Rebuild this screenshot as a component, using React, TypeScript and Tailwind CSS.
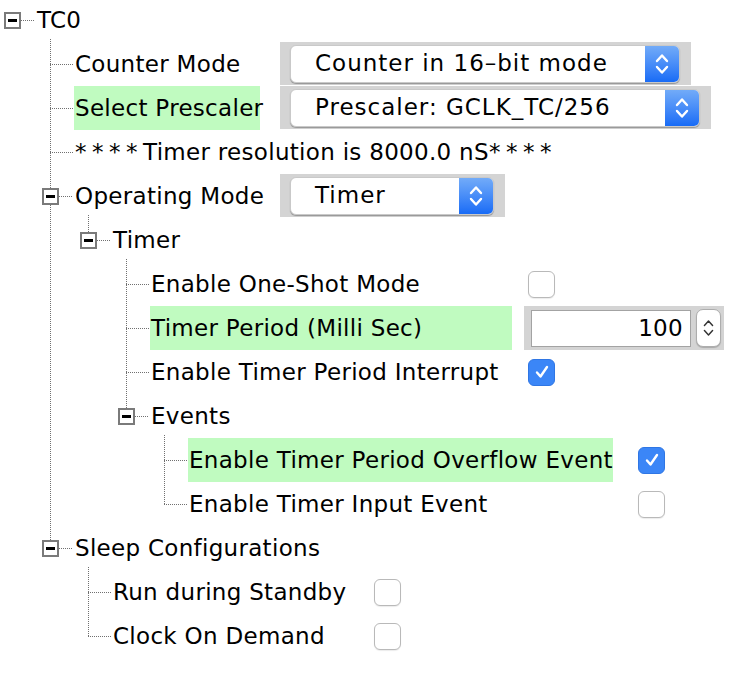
import React from 'react';

type TreeNode = {
  label: React.ReactNode;
  id: string;
  green?: boolean;
  labelCls?: string;
  control?: React.ReactNode;
  children?: TreeNode[];
};

const Chevrons = ({ color = 'white', w = 16, h = 28, sw = 2.4 }: { color?: string; w?: number; h?: number; sw?: number }) => (
  <svg width={w} height={h} viewBox="0 0 16 28" fill="none">
    <path d="M3 11 L8 5.5 L13 11" stroke={color} strokeWidth={sw} strokeLinecap="round" strokeLinejoin="round" />
    <path d="M3 17 L8 22.5 L13 17" stroke={color} strokeWidth={sw} strokeLinecap="round" strokeLinejoin="round" />
  </svg>
);

const Select = ({ value, fieldCls }: { value: string; fieldCls: string }) => (
  <div className="ml-[20px] h-[43px] self-start bg-[#d4d4d4] pl-[10px] pr-[11px] flex items-center">
    <div className={`${fieldCls} h-[38px] rounded-[6px] bg-white border border-[#c9c9c9] shadow-[0_1px_1px_rgba(0,0,0,0.3)] flex items-center overflow-hidden`}>
      <span className="flex-1 pl-[24px] whitespace-nowrap tracking-[1px]">{value}</span>
      <div className="w-[34px] h-full bg-gradient-to-b from-[#72abf8] to-[#176bf6] flex items-center justify-center">
        <Chevrons />
      </div>
    </div>
  </div>
);

const Check = ({ on = false, ml }: { on?: boolean; ml: string }) =>
  on ? (
    <div className={`${ml} w-[27px] h-[27px] rounded-[6px] bg-[#3b86f7] border border-[#2f76e4] flex items-center justify-center`}>
      <svg width="18" height="18" viewBox="0 0 18 18" fill="none">
        <path d="M4 9.5 L7.5 13.5 L14 4" stroke="white" strokeWidth="2.4" strokeLinecap="round" strokeLinejoin="round" />
      </svg>
    </div>
  ) : (
    <div className={`${ml} w-[27px] h-[27px] rounded-[6px] bg-white border border-[#b9b9b9] shadow-[0_1px_1px_rgba(0,0,0,0.08)]`} />
  );

const Spinner = () => (
  <div className="ml-[12px] h-[44px] w-[200px] bg-[#d4d4d4] flex items-center pl-[7px]">
    <div className="w-[160px] h-[37px] bg-white border border-[#a3a3a3] flex items-center justify-end pr-[7px]">100</div>
    <div className="ml-[5px] w-[25px] h-[38px] rounded-[7px] bg-white border border-[#adadad] shadow-[0_1px_1px_rgba(0,0,0,0.2)] flex items-center justify-center">
      <Chevrons color="#333" w={13} h={24} sw={1.8} />
    </div>
  </div>
);

const Stars = () => <span className="tracking-[5.5px]">****</span>;

const tree: TreeNode = {
  id: 'tc0',
  label: 'TC0',
  children: [
    {
      id: 'cm',
      label: 'Counter Mode',
      labelCls: 'w-[186px]',
      control: <Select value="Counter in 16–bit mode" fieldCls="w-[390px]" />,
    },
    {
      id: 'sp',
      label: 'Select Prescaler',
      green: true,
      labelCls: 'w-[186px]',
      control: <Select value="Prescaler: GCLK_TC/256" fieldCls="w-[410px]" />,
    },
    {
      id: 'res',
      label: (
        <>
          <Stars />Timer resolution is 8000.0 nS<Stars />
        </>
      ),
    },
    {
      id: 'om',
      label: 'Operating Mode',
      labelCls: 'w-[186px]',
      control: <Select value="Timer" fieldCls="w-[204px]" />,
      children: [
        {
          id: 'timer',
          label: 'Timer',
          children: [
            { id: 'os', label: 'Enable One-Shot Mode', labelCls: 'w-[362px]', control: <Check ml="ml-[16px]" /> },
            { id: 'tp', label: 'Timer Period (Milli Sec)', green: true, labelCls: 'w-[362px]', control: <Spinner /> },
            { id: 'tpi', label: 'Enable Timer Period Interrupt', labelCls: 'w-[362px]', control: <Check on ml="ml-[16px]" /> },
            {
              id: 'ev',
              label: 'Events',
              children: [
                { id: 'ovf', label: 'Enable Timer Period Overflow Event', green: true, labelCls: 'w-[425px]', control: <Check on ml="ml-[25px]" /> },
                { id: 'inp', label: 'Enable Timer Input Event', labelCls: 'w-[425px]', control: <Check ml="ml-[25px]" /> },
              ],
            },
          ],
        },
      ],
    },
    {
      id: 'sleep',
      label: 'Sleep Configurations',
      children: [
        { id: 'rs', label: 'Run during Standby', labelCls: 'w-[246px]', control: <Check ml="ml-[16px]" /> },
        { id: 'cod', label: 'Clock On Demand', labelCls: 'w-[246px]', control: <Check ml="ml-[16px]" /> },
      ],
    },
  ],
};

const ROW = 44;
const rowCount = (n: TreeNode): number => 1 + (n.children ?? []).reduce((s, c) => s + rowCount(c), 0);

const Row = ({ node }: { node: TreeNode }) => {
  const hasKids = !!node.children;
  return (
    <div className="h-[44px] flex items-center">
      <div className="w-[36px] h-full flex items-center shrink-0">
        {hasKids ? (
          <div className="relative z-10 ml-[4px] w-[17px] h-[17px] border-2 border-[#7a7a7a] bg-white flex items-center justify-center shrink-0">
            <div className="w-[9px] h-[3px] bg-black" />
          </div>
        ) : (
          <div className="w-[12px] shrink-0" />
        )}
        <div className="flex-1 mr-[1px] h-px bg-[repeating-linear-gradient(to_right,#707070_0_1px,transparent_1px_2px)]" />
      </div>
      <div className={`${node.labelCls ?? ''} h-full pl-px flex items-center whitespace-nowrap shrink-0 ${node.green ? 'bg-[#c0fbc0]' : ''}`}>
        {node.label}
      </div>
      {node.control}
    </div>
  );
};

const Branch = ({ node }: { node: TreeNode }) => {
  const kids = node.children ?? [];
  const lastTop = kids.slice(0, -1).reduce((s, c) => s + rowCount(c), 0) * ROW;
  return (
    <>
      <Row node={node} />
      {kids.length > 0 && (
        <div className="relative ml-[38px]">
          <div
            className="absolute left-[12px] -top-[3px] w-px bg-[repeating-linear-gradient(to_bottom,#707070_0_1px,transparent_1px_2px)]"
            style={{ height: lastTop + ROW / 2 + 3 }}
          />
          {kids.map((k) => (
            <Branch key={k.id} node={k} />
          ))}
        </div>
      )}
    </>
  );
};

export default function App() {
  return (
    <div className="w-[756px] h-[674px] overflow-hidden bg-white text-black text-[23px] tracking-[0.3px] leading-none font-['DejaVu_Sans',sans-serif]">
      <div className="-mt-[2px]">
        <Branch node={tree} />
      </div>
    </div>
  );
}
